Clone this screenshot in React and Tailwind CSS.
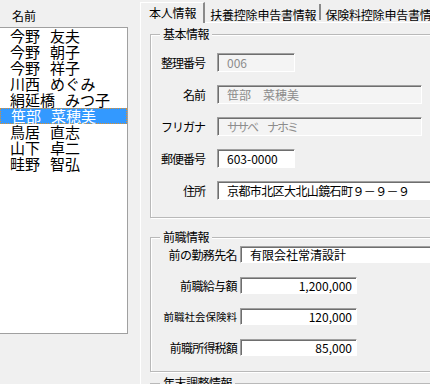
import React from "react";

const people = [
  ["今野", "友夫"],
  ["今野", "朝子"],
  ["今野", "祥子"],
  ["川西", "めぐみ"],
  ["絹延橋", "みつ子"],
  ["笹部", "菜穂美"],
  ["鳥居", "直志"],
  ["山下", "卓二"],
  ["畦野", "智弘"],
];

const SELECTED = 5;

function Box({ children, width, disabled = false, align = "left", className = "" }) {
  return (
    <div
      className={`h-full flex items-center border border-t-[#a0a0a0] border-l-[#a0a0a0] border-b-white border-r-white shadow-[inset_1px_1px_0_#6e6e6e] text-[12px] whitespace-nowrap overflow-hidden ${
        disabled ? "bg-[#f4f4f4] text-[#8c8c8c]" : "bg-white text-black"
      } ${align === "right" ? "justify-end pr-[4px]" : "pl-[9px]"} ${className}`}
      style={width ? { width } : undefined}
    >
      {children}
    </div>
  );
}

function Row({ label, labelW, gap, h, children, labelClass = "text-[12px] tracking-[-1px]" }) {
  return (
    <div className="flex items-center" style={{ height: h }}>
      <div className={`text-right shrink-0 whitespace-nowrap ${labelClass}`} style={{ width: labelW, marginRight: gap }}>
        {label}
      </div>
      {children}
    </div>
  );
}

function Group({ title, children, className = "" }) {
  return (
    <fieldset
      className={`w-[320px] border border-[#b9b9b9] shadow-[inset_1px_1px_0_#fff,1px_1px_0_#fff] ${className}`}
    >
      <legend className="relative ml-[9px] px-[3px] bg-[#f0f0f0] text-[12px] leading-[14px] tracking-[-0.5px]">
        {title}
      </legend>
      {children}
    </fieldset>
  );
}

export default function App() {
  return (
    <div className="w-[430px] h-[384px] overflow-hidden bg-[#f0f0f0] flex font-['Noto_Sans_CJK_JP',sans-serif] text-black">
      {/* name list */}
      <div className="w-[128px] h-[334px] flex flex-col shrink-0">
        <div className="h-[28px] border-b border-[#a0a0a0] pl-[12px] pt-[9px] text-[12px] leading-[14px]">名前</div>
        <div className="flex-1 bg-white border-r border-b border-[#a0a0a0]">
          {people.map(([sei, mei], i) => (
            <div
              key={i}
              className={`h-[16px] flex items-center gap-[10px] pl-[10px] text-[15px] leading-[16px] ${
                i === SELECTED
                  ? "bg-[#3399ff] text-white border border-dotted border-[#e0902a] pl-[9px]"
                  : ""
              }`}
            >
              <span>{sei}</span>
              <span>{mei}</span>
            </div>
          ))}
        </div>
      </div>

      {/* tabs */}
      <div className="ml-[12px] flex-1 flex flex-col pt-[2px] min-w-0">
        <div className="h-[21px] flex items-stretch border-b border-white text-[12px] tracking-[-0.2px] whitespace-nowrap">
          <div className="relative -mb-px bg-[#f0f0f0] border-l border-t border-white border-r-2 border-r-[#8a8a8a] pl-[8px] pr-[7px] pt-[1px] leading-[18px]">
            本人情報
          </div>
          <div className="pl-[5px] pr-[3px] pt-[2px] leading-[18px] border-r-2 border-[#8a8a8a] my-[2px]">
            扶養控除申告書情報
          </div>
          <div className="pl-[4px] pt-[2px] leading-[18px] my-[2px]">保険料控除申告書情報</div>
        </div>

        <div className="flex-1 border-l border-white pl-[9px] pt-[4px]">
          <Group title="基本情報" className="pt-[12px] pb-[17px]">
            <div className="flex flex-col gap-[13px]">
              <Row label="整理番号" labelW={54} gap={12} h={19}>
                <Box width={78} disabled>006</Box>
              </Row>
              <Row label="名前" labelW={54} gap={12} h={19}>
                <Box width={205} disabled>笹部　菜穂美</Box>
              </Row>
              <Row label="フリガナ" labelW={54} gap={12} h={19}>
                <Box width={205} disabled className="tracking-[-2px]">ササベ　ナホミ</Box>
              </Row>
              <Row label="郵便番号" labelW={54} gap={12} h={19}>
                <Box width={78}>603-0000</Box>
              </Row>
              <Row label="住所" labelW={54} gap={12} h={19}>
                <Box width={240} className="tracking-[-0.6px]">京都市北区大北山鏡石町９－９－９</Box>
              </Row>
            </div>
          </Group>

          <Group title="前職情報" className="mt-[12px] pt-[2px] pb-[15px]">
            <div className="flex flex-col gap-[14px]">
              <Row label="前の勤務先名" labelW={86} gap={3} h={17} labelClass="text-[12px] tracking-[-0.6px]">
                <Box width={220}>有限会社常清設計</Box>
              </Row>
              <Row label="前職給与額" labelW={86} gap={3} h={17} labelClass="text-[12px] tracking-[-0.6px]">
                <Box width={117} align="right">1,200,000</Box>
              </Row>
              <Row label="前職社会保険料" labelW={86} gap={3} h={17} labelClass="text-[10.5px] tracking-[0px]">
                <Box width={117} align="right">120,000</Box>
              </Row>
              <Row label="前職所得税額" labelW={86} gap={3} h={17} labelClass="text-[12px] tracking-[-0.8px]">
                <Box width={117} align="right">85,000</Box>
              </Row>
            </div>
          </Group>

          <Group title="年末調整情報" className="mt-[4px] h-[40px]" />
        </div>
      </div>
    </div>
  );
}
